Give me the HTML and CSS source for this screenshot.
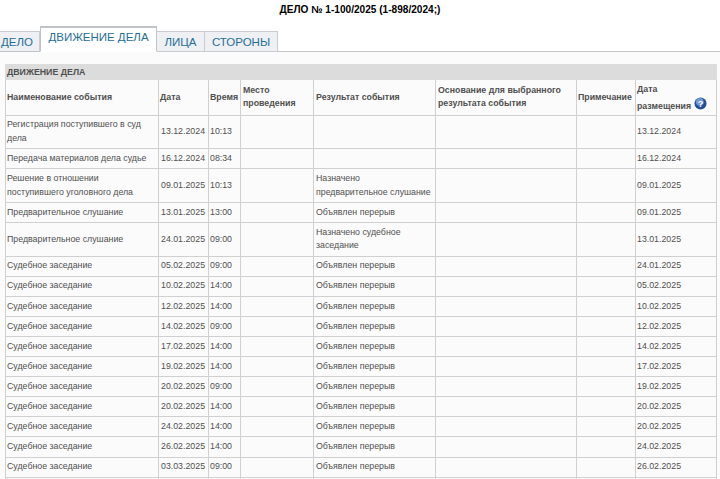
FILE: index.html
```html
<!DOCTYPE html>
<html lang="ru">
<head>
  <meta charset="UTF-8" />
  <title>ДЕЛО № 1-100/2025</title>
  <link rel="stylesheet" href="styles.css">
</head>
<body>
  <h1 class="case-title">ДЕЛО № 1-100/2025 (1-898/2024;)</h1>
  <div class="tabs">
    <a class="tab tab-first">ДЕЛО</a>
    <a class="tab tab-active">ДВИЖЕНИЕ ДЕЛА</a>
    <a class="tab tab-faces">ЛИЦА</a>
    <a class="tab tab-sides">СТОРОНЫ</a>
  </div>
  <div class="content">
    <table class="events">
      <colgroup>
        <col class="c-name"><col class="c-date"><col class="c-time"><col class="c-place">
        <col class="c-result"><col class="c-basis"><col class="c-note"><col class="c-posted">
      </colgroup>
      <tr><td class="band" colspan="8">ДВИЖЕНИЕ ДЕЛА</td></tr>
      <tr class="head">
        <td>Наименование события</td>
        <td>Дата</td>
        <td>Время</td>
        <td>Место проведения</td>
        <td>Результат события</td>
        <td>Основание для выбранного результата события</td>
        <td>Примечание</td>
        <td>Дата<br>размещения
          <svg class="help" viewBox="0 0 14 14" width="13" height="13">
            <circle cx="7" cy="7" r="6.5" fill="#234f96"/>
            <circle cx="6.2" cy="5.2" r="4.2" fill="#6f97d3"/>
            <text x="7" y="10.5" text-anchor="middle" class="help-mark">?</text>
          </svg>
        </td>
      </tr>
      <tr><td>Регистрация поступившего в суд дела</td><td>13.12.2024</td><td>10:13</td><td></td><td></td><td></td><td></td><td>13.12.2024</td></tr>
      <tr><td>Передача материалов дела судье</td><td>16.12.2024</td><td>08:34</td><td></td><td></td><td></td><td></td><td>16.12.2024</td></tr>
      <tr><td>Решение в отношении поступившего уголовного дела</td><td>09.01.2025</td><td>10:13</td><td></td><td>Назначено<br>предварительное слушание</td><td></td><td></td><td>09.01.2025</td></tr>
      <tr><td>Предварительное слушание</td><td>13.01.2025</td><td>13:00</td><td></td><td>Объявлен перерыв</td><td></td><td></td><td>09.01.2025</td></tr>
      <tr><td>Предварительное слушание</td><td>24.01.2025</td><td>09:00</td><td></td><td>Назначено судебное заседание</td><td></td><td></td><td>13.01.2025</td></tr>
      <tr><td>Судебное заседание</td><td>05.02.2025</td><td>09:00</td><td></td><td>Объявлен перерыв</td><td></td><td></td><td>24.01.2025</td></tr>
      <tr><td>Судебное заседание</td><td>10.02.2025</td><td>14:00</td><td></td><td>Объявлен перерыв</td><td></td><td></td><td>05.02.2025</td></tr>
      <tr><td>Судебное заседание</td><td>12.02.2025</td><td>14:00</td><td></td><td>Объявлен перерыв</td><td></td><td></td><td>10.02.2025</td></tr>
      <tr><td>Судебное заседание</td><td>14.02.2025</td><td>09:00</td><td></td><td>Объявлен перерыв</td><td></td><td></td><td>12.02.2025</td></tr>
      <tr><td>Судебное заседание</td><td>17.02.2025</td><td>14:00</td><td></td><td>Объявлен перерыв</td><td></td><td></td><td>14.02.2025</td></tr>
      <tr><td>Судебное заседание</td><td>19.02.2025</td><td>14:00</td><td></td><td>Объявлен перерыв</td><td></td><td></td><td>17.02.2025</td></tr>
      <tr><td>Судебное заседание</td><td>20.02.2025</td><td>09:00</td><td></td><td>Объявлен перерыв</td><td></td><td></td><td>19.02.2025</td></tr>
      <tr><td>Судебное заседание</td><td>20.02.2025</td><td>14:00</td><td></td><td>Объявлен перерыв</td><td></td><td></td><td>20.02.2025</td></tr>
      <tr><td>Судебное заседание</td><td>24.02.2025</td><td>14:00</td><td></td><td>Объявлен перерыв</td><td></td><td></td><td>20.02.2025</td></tr>
      <tr><td>Судебное заседание</td><td>26.02.2025</td><td>14:00</td><td></td><td>Объявлен перерыв</td><td></td><td></td><td>24.02.2025</td></tr>
      <tr><td>Судебное заседание</td><td>03.03.2025</td><td>09:00</td><td></td><td>Объявлен перерыв</td><td></td><td></td><td>26.02.2025</td></tr>
      <tr class="last"><td></td><td></td><td></td><td></td><td></td><td></td><td></td><td></td></tr>
    </table>
  </div>
</body>
</html>
```

FILE: styles.css
```css
html, body {
  height: 479px;
  overflow: hidden;
}
body {
  margin: 0;
  background: #fff;
  font-family: "Liberation Sans", Arial, sans-serif;
  color: #505050;
}
.case-title {
  margin: 0;
  padding-top: 3px;
  height: 25px;
  box-sizing: border-box;
  font-size: 10.1px;
  line-height: 14px;
  font-weight: bold;
  text-align: center;
  color: #000;
}
.tabs {
  display: flex;
  align-items: flex-end;
  height: 26px;
  box-sizing: border-box;
  margin-top: 1px;
  border-bottom: 1px solid #c4c4c4;
}
.tab {
  box-sizing: border-box;
  height: 21px;
  margin-bottom: -1px;
  border: 1px solid #c8ccd0;
  border-left: none;
  background: #eef0f3;
  color: #1f6f96;
  font-size: 11.5px;
  line-height: 21px;
  text-align: center;
}
.tab-first { width: 40px; padding-right: 5px; border-bottom-color: #c0c4c8; }
.tab-active {
  width: 117px;
  height: 26px;
  background: #fff;
  border: 1px solid #c0c4c8;
  border-top-width: 2px;
  border-bottom-color: #fff;
  line-height: 18px;
}
.tab-faces { width: 48px; }
.tab-sides { width: 73px; }
.content {
  background: #fbfbfb;
  padding: 12px 4px 0 5px;
  height: 420px;
}
.events {
  table-layout: fixed;
  width: 711px;
  border-collapse: collapse;
  font-size: 8.8px;
  line-height: 13.5px;
}
.c-name { width: 153px; }
.c-date { width: 50px; }
.c-time { width: 32px; }
.c-place { width: 73px; }
.c-result { width: 122px; }
.c-basis { width: 141px; }
.c-note { width: 59px; }
.c-posted { width: 81px; }
.events td {
  border: 1px solid #d0d0d0;
  padding: 2.8px 2px;
  vertical-align: middle;
}
.events td:first-child,
.events td:nth-child(3),
.events td:last-child {
  padding-left: 1px;
}
.events td.band {
  background: #dcdcdc;
  border-color: #dcdcdc;
  font-weight: bold;
  padding: 0 1px;
  height: 14px;
  line-height: 14px;
}
.head td {
  font-weight: bold;
  height: 29px;
}
.head td:nth-child(2),
.head td:nth-child(7) {
  padding-left: 1px;
}
.head td:last-child {
  padding-top: 0;
  padding-bottom: 0;
  line-height: 16px;
}
.help {
  vertical-align: -1px;
}
.help-mark {
  font-size: 10px;
  font-weight: bold;
  fill: #fff;
}
.last td {
  height: 14px;
}
```
